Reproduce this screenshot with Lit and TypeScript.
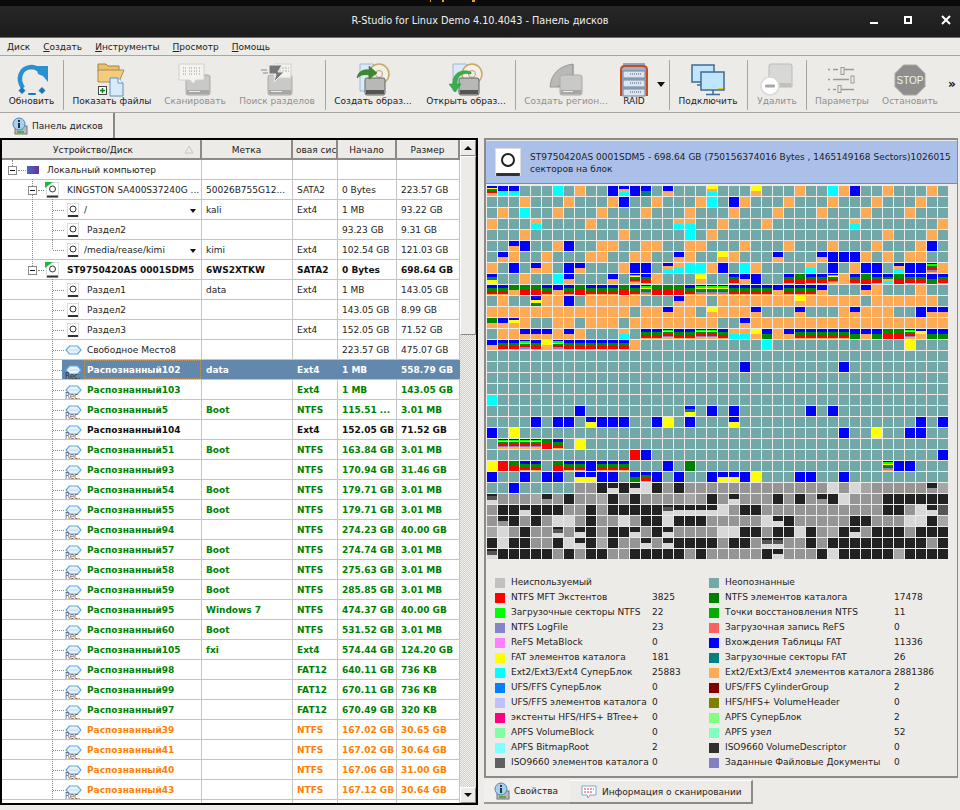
import { LitElement, html, css, svg } from "lit";
import { customElement } from "lit/decorators.js";

const MAP = [
"ebbTTTCTOT"+"TBsBhTaTTT"+"tTTTdTTTOT"+"TCOBTTOTTT"+"OT",
"TTTOTTTOTT"+"TOBTTOTTTO"+"CTBOTTTOTT"+"TOTTTOTTTO"+"TT",
"TOTCTTOTTT"+"OTTTOTTTOT"+"TTOTTTOTTT"+"OTTTOTTTOT"+"TT",
"OTTTcTTTTO"+"TTTTTTTccT"+"TOTTTOTTTT"+"TTTcTTTTTT"+"TO",
"TTTOTTTTTT"+"TTOTTTTTCT"+"OTTTTTTTTT"+"TTTTTTOTTT"+"OT",
"TTaBTTOBTT"+"OOTTOOTTOO"+"TTTOTTTOTT"+"TOTTTOTTTO"+"BT",
"TaOTTOTTTO"+"OTTOOTTaOT"+"TdOTTTaTTT"+"aBBBOTOTOO"+"TT",
"OTBTaOTBaT"+"TTOBBTucCC"+"OBTCOTTTTc"+"TBTOBBTvBB"+"mO",
"xTTOTTCaTT"+"TaTmfOTTTd"+"TTfaBTTfgf"+"fmOfgfwgff"+"jf",
"ffkggfafgf"+"ffgfmgggfm"+"mmffffafff"+"aTTTaOTTTO"+"TT",
"TOTTyOOBTO"+"OOOOTTTaOO"+"TOOOOOOOdO"+"OOOOTOOOOO"+"OT",
"OOOOOOOOOO"+"OOOTOOaOOT"+"dOOOaTTTaT"+"TTOaOOOTTB"+"aa",
"kazOTTOOTO"+"OOTOOOOOOO"+"OTTaOOOOOO"+"OOOOOOOOOO"+"OO",
"TOOaaaOaOT"+"TTcTffmffm"+"mfccdjOaff"+"fffjajggmz"+"jj",
"affmfdmfff"+"fffOTTTTTT"+"TTTTTCTTTT"+"TTTTTTTTYT"+"TT",
"TTTTTTTTTT"+"TTTTTTTTTT"+"TTTTTTTTTT"+"TTTTTTTTTT"+"TT",
"TTTTTTTTTT"+"TTTTTTTTTT"+"TTTBTTTTTT"+"TTBTTTTTTT"+"TT",
"TTTTTTTTTT"+"TTTTTTTTTT"+"TTTTTTTTTT"+"TTTTTTTTTT"+"TT",
"TTTTTTTTTT"+"TTTTTTTTTT"+"TTTTTTTTTT"+"TTTTTTTTTT"+"TT",
"CTTTTTTTTT"+"TTTTTTTTTT"+"TTTTTTTTTT"+"TTTTTTTTTT"+"TT",
"TTTTTTTTBT"+"TTTTTTTTxT"+"BTBTTTTTTB"+"TBTTTTTTTT"+"TT",
"TTTTBTBBTi"+"BBBTTBYTBT"+"TTiTTTTTTT"+"TTTTTTTTTB"+"TB",
"BTYTTTTTTT"+"TTTTTTTTTT"+"TTTTTTTTTT"+"TTBTTYTTBB"+"TT",
"TmmmmgfTYT"+"TTTTTTTTTT"+"TTTTTTTTTT"+"TTTTTTTTTT"+"TT",
"TTTTTTTTTT"+"TTTRBTTTTT"+"TTTTTTTTTT"+"TTTTTTTTTT"+"TB",
"YRgffTgffB"+"fffTTTBTGT"+"TTTTTTTTTT"+"TTTTTTmBBT"+"TT",
"BTTBTBBTii"+"BBTjfBTBTT"+"BiiBYTTTBB"+"TTBTTTTTTT"+"TT",
"TTBTTTTT11"+"DnDnLD1D11"+"1111111111"+"1L1L211111"+"p2",
"q1112p1D11"+"2D1D111121"+"D1n111D1D1"+"pDL111DDDD"+"DD",
"1DDnDDD11D"+"1DDDDDqnnn"+"nL1DD11111"+"111111DD1L"+"nX",
"1pD1D1LL1D"+"11L1DDLDDD"+"11111LnD11"+"111DD111LL"+"D2",
"2L1D11q1nD"+"1DDn1Dn111"+"1LLDD1DDLD"+"12Dn1DDD1D"+"DD",
"DLDD11DLnD"+"2D11n1nDDD"+"D1DD1qq11D"+"1DDDDDDDDD"+"1D",
"qDDDDD1D1D"+"D11DDDDD1D"+"11111Dn111"+"DLDDDDD2DD"+"DD",
];

interface Row {
  name: string; label?: string; fs?: string; start?: string; size?: string;
  tone?: string; icon: string; lvl: number; v?: string; drop?: boolean; narrow?: boolean;
}
const rec = (n: string, label: string, fs: string, start: string, size: string, tone: string): Row =>
  ({ name: "Распознанный" + n, label, fs, start, size, tone, icon: "rec", lvl: 2, v: "v52" });

const ROWS: Row[] = [
  { name: "Локальный компьютер", icon: "pc", lvl: 0, v: "v12t" },
  { name: "KINGSTON SA400S37240G ...", label: "50026B755G12...", fs: "SATA2", start: "0 Bytes", size: "223.57 GB", icon: "hd", lvl: 1, v: "v32" },
  { name: "/", label: "kali", fs: "Ext4", start: "1 MB", size: "93.22 GB", icon: "vol", lvl: 2, v: "v32 v52", drop: true, narrow: true },
  { name: "Раздел2", start: "93.23 GB", size: "9.31 GB", icon: "vol", lvl: 2, v: "v32 v52" },
  { name: "/media/rease/kimi", label: "kimi", fs: "Ext4", start: "102.54 GB", size: "121.03 GB", icon: "vol", lvl: 2, v: "v32 v52e", drop: true, narrow: true },
  { name: "ST9750420AS 0001SDM5", label: "6WS2XTKW", fs: "SATA2", start: "0 Bytes", size: "698.64 GB", tone: "k", icon: "hd", lvl: 1, v: "v32e" },
  { name: "Раздел1", label: "data", fs: "Ext4", start: "1 MB", size: "143.05 GB", icon: "vol", lvl: 2, v: "v52" },
  { name: "Раздел2", start: "143.05 GB", size: "8.99 GB", icon: "vol", lvl: 2, v: "v52" },
  { name: "Раздел3", fs: "Ext4", start: "152.05 GB", size: "71.52 GB", icon: "vol", lvl: 2, v: "v52" },
  { name: "Свободное Место8", start: "223.57 GB", size: "475.07 GB", icon: "free", lvl: 2, v: "v52" },
  rec("102", "data", "Ext4", "1 MB", "558.79 GB", "sel"),
  rec("103", "", "Ext4", "1 MB", "143.05 GB", "g"),
  rec("5", "Boot", "NTFS", "115.51 ...", "3.01 MB", "g"),
  rec("104", "", "Ext4", "152.05 GB", "71.52 GB", "k"),
  rec("51", "Boot", "NTFS", "163.84 GB", "3.01 MB", "g"),
  rec("93", "", "NTFS", "170.94 GB", "31.46 GB", "g"),
  rec("54", "Boot", "NTFS", "179.71 GB", "3.01 MB", "g"),
  rec("55", "Boot", "NTFS", "179.71 GB", "3.01 MB", "g"),
  rec("94", "", "NTFS", "274.23 GB", "40.00 GB", "g"),
  rec("57", "Boot", "NTFS", "274.74 GB", "3.01 MB", "g"),
  rec("58", "Boot", "NTFS", "275.63 GB", "3.01 MB", "g"),
  rec("59", "Boot", "NTFS", "285.85 GB", "3.01 MB", "g"),
  rec("95", "Windows 7", "NTFS", "474.37 GB", "40.00 GB", "g"),
  rec("60", "Boot", "NTFS", "531.52 GB", "3.01 MB", "g"),
  rec("105", "fxi", "Ext4", "574.44 GB", "124.20 GB", "g"),
  rec("98", "", "FAT12", "640.11 GB", "736 KB", "g"),
  rec("99", "", "FAT12", "670.11 GB", "736 KB", "g"),
  rec("97", "", "FAT12", "670.49 GB", "320 KB", "g"),
  rec("39", "", "NTFS", "167.02 GB", "30.65 GB", "o"),
  rec("41", "", "NTFS", "167.02 GB", "30.64 GB", "o"),
  rec("40", "", "NTFS", "167.06 GB", "31.00 GB", "o"),
  rec("43", "", "NTFS", "167.12 GB", "30.64 GB", "o"),
];

const LEGEND: [string, string, string, string, string, string][] = [
  ["#c0c0c0", "Неиспользуемый", "", "#73a8a8", "Неопознанные", ""],
  ["#ff0000", "NTFS MFT Экстентов", "3825", "#008000", "NTFS элементов каталога", "17478"],
  ["#00ff00", "Загрузочные секторы NTFS", "22", "#00b000", "Точки восстановления NTFS", "11"],
  ["#8484c8", "NTFS LogFile", "23", "#ff6060", "Загрузочная запись ReFS", "0"],
  ["#ff80ff", "ReFS MetaBlock", "0", "#0000ff", "Вхождения Таблицы FAT", "11336"],
  ["#ffff00", "FAT элементов каталога", "181", "#008080", "Загрузочные секторы FAT", "26"],
  ["#00ffff", "Ext2/Ext3/Ext4 СуперБлок", "25883", "#ffaa55", "Ext2/Ext3/Ext4 элементов каталога", "2881386"],
  ["#0080ff", "UFS/FFS СуперБлок", "0", "#800000", "UFS/FFS CylinderGroup", "2"],
  ["#c0c0ff", "UFS/FFS элементов каталога", "0", "#808000", "HFS/HFS+ VolumeHeader", "0"],
  ["#ff0080", "экстенты HFS/HFS+ BTree+", "0", "#80ff80", "APFS СуперБлок", "2"],
  ["#80ffa0", "APFS VolumeBlock", "0", "#80ffc0", "APFS узел", "52"],
  ["#80ffff", "APFS BitmapRoot", "2", "#303030", "ISO9660 VolumeDescriptor", "0"],
  ["#606060", "ISO9660 элементов каталога", "0", "#8080c0", "Заданные Файловые Документы", "0"],
];

const disk = (x: number, y: number, w: number, h: number) => svg`
  <rect x=${x} y=${y} width=${w} height=${h} rx="2" fill="#c9c9c7" stroke="#a9a9a7"/>
  <rect x=${x + 1} y=${y + h - 5} width=${w - 2} height="4" fill="#a6a6a4"/>
  <rect x=${x + 3} y=${y + h - 4} width=${w * 0.45} height="1" fill="#eee"/>`;

const ICONS: Record<string, unknown> = {
  refresh: svg`<svg width="34" height="32" viewBox="0 0 34 32">
    <path d="M8 24C2 15 5 4 16 3c3 0 6 1 8 3" fill="none" stroke="#2a90d0" stroke-width="4.500"/>
    <path d="M21 2h12v16L28 12l-5-2z" fill="#2a90d0"/>
    <path d="M7 23l3.500 3.500L7 30l-3.500-3.500zM27 23l3.500 3.500L27 30l-3.500-3.500z" fill="#1878b8"/>
    <rect x="13" y="29" width="8" height="2" rx="1" fill="#1878b8"/></svg>`,
  files: svg`<svg width="30" height="34" viewBox="0 0 30 34">
    <path d="M1 1h8l2 2h11v5H1z" fill="#e8c070" stroke="#a88040"/>
    <path d="M1 19V7h26l-5 12z" fill="#f2cd80" stroke="#b08a45"/>
    <path d="M13 15h8l5 5v13H13z" fill="#d8ecf8" stroke="#5a92c0"/>
    <path d="M21 15v5h5" fill="#fff" stroke="#5a92c0"/>
    <rect x="1.500" y="23.500" width="8" height="8" fill="#fff" stroke="#444"/>
    <path d="M5.500 25v5M3 27.500h5" stroke="#0a7a20" stroke-width="1.500"/></svg>`,
  scan: svg`<svg width="34" height="34" viewBox="0 0 34 34">
    ${disk(8, 12, 24, 20)}
    <path d="M1 1h25v16H18l-3 4-3-4H1z" fill="#f4f3ef" stroke="#d0d0cc"/>
    <path d="M5 5h4M11 5h3M16 5h3M21 5h2M5 8h4M11 8h3M16 8h3M21 8h2M5 11h4M11 11h3M16 11h3M21 11h2" stroke="#9a9a9a" stroke-dasharray="1 1"/></svg>`,
  search: svg`<svg width="34" height="34" viewBox="0 0 34 34">
    ${disk(8, 12, 24, 20)}
    <path d="M14 1h17v14H14z" fill="#f4f3ef" stroke="#d0d0cc"/>
    <path d="M19 5h10M19 8h10" stroke="#a8a8a8" stroke-dasharray="2 1"/>
    <path d="M9 2h13l-4 7h6L14 19l2-8H9z" fill="#777" stroke="#eee"/>
    <path d="M1 7h6M3 10h5" stroke="#888"/></svg>`,
  mkimg: svg`<svg width="34" height="34" viewBox="0 0 34 34">
    <path d="M4 1h13l5 5v22H4z" fill="#dce9f6" stroke="#9ab8d8"/>
    <circle cx="23" cy="11" r="10" fill="#f3efe4" stroke="#c8a868" stroke-width="1.500"/><circle cx="23" cy="11" r="3.500" fill="#eee" stroke="#b8a070"/>
    <rect x="9" y="15" width="20" height="17" rx="2" fill="#b8b8b6" stroke="#666"/><rect x="10" y="27" width="18" height="4" fill="#555"/>
    <path d="M1 15c1-7 7-9 12-8V3l8 7-8 6v-4c-5-1-9 0-12 3z" fill="#3c8a30" stroke="#2a6a20" stroke-width=".5"/></svg>`,
  opimg: svg`<svg width="34" height="34" viewBox="0 0 34 34">
    <path d="M4 1h13l5 5v22H4z" fill="#dce9f6" stroke="#9ab8d8"/>
    <circle cx="23" cy="11" r="10" fill="#f3efe4" stroke="#c8a868" stroke-width="1.500"/><circle cx="23" cy="11" r="3.500" fill="#eee" stroke="#b8a070"/>
    <rect x="10" y="15" width="20" height="17" rx="2" fill="#b8b8b6" stroke="#666"/><rect x="11" y="27" width="18" height="4" fill="#555"/>
    <path d="M22 11C14 9 8 12 8 21h4l-6 8-6-8h4C3 11 12 5 22 9z" fill="#38b048" stroke="#2a8a30" stroke-width=".5"/></svg>`,
  region: svg`<svg width="34" height="34" viewBox="0 0 34 34">
    <path d="M1 24C2 11 10 3 24 1v11c-7 1-11 6-12 12z" fill="#b9b9b7" stroke="#9a9a98"/>
    <path d="M24 1v22H8" fill="none" stroke="#8a8a8a" stroke-width=".7"/>
    ${disk(11, 12, 22, 20)}</svg>`,
  raid: svg`<svg width="28" height="34" viewBox="0 0 28 34">
    <rect x="3" y="0" width="22" height="4" fill="#8ea4bc"/>
    <rect x="1" y="3" width="26" height="30" fill="#9db0c6"/>
    <path d="M1 33V7q0-4 4-4h18q4 0 4 4v26" fill="none" stroke="#cc4a1c" stroke-width="2"/>
    <g fill="#dbe6f0" stroke="#6f85a0"><rect x="3" y="8" width="22" height="7"/><rect x="3" y="17" width="22" height="7"/><rect x="3" y="26" width="22" height="7"/></g>
    <path d="M10 11h11M10 20h11M10 29h11" stroke="#556" stroke-dasharray="1 1"/></svg>`,
  connect: svg`<svg width="34" height="32" viewBox="0 0 34 32">
    <rect x="1" y="1" width="22" height="17" fill="#bfe6fa" stroke="#3f6a98" stroke-width="1.500"/>
    <path d="M9 18h6v3H6" stroke="#3f6a98" fill="none" stroke-width="1.500"/>
    <rect x="10" y="8" width="23" height="18" fill="#bfe6fa" stroke="#3f6a98" stroke-width="1.500"/>
    <rect x="27" y="24" width="5" height="1" fill="#e8c020"/>
    <path d="M22 26v4M15 30.500h14" stroke="#3f6a98" stroke-width="1.500"/></svg>`,
  del: svg`<svg width="34" height="34" viewBox="0 0 34 34">
    <path d="M9 3q0-2 2-2h19q2 0 2 2v21H9z" fill="#d8d8d6" stroke="#bbb"/>
    <rect x="10" y="20" width="21" height="4" fill="#c0c0be"/>
    <circle cx="10" cy="23" r="9" fill="#fff" stroke="#d8d8d6" stroke-width="1.500"/>
    <rect x="5" y="21.500" width="10" height="3" rx="1" fill="#a8a8a8"/></svg>`,
  params: svg`<svg width="30" height="26" viewBox="0 0 30 26">
    <g stroke="#9a9a9a" stroke-width="1.500" fill="none">
    <path d="M1 2.500h2M6 2.500h5M17 2.500h10M1 12.500h2M6 12.500h16M1 22.500h2M6 22.500h3M14 22.500h13"/></g>
    <g fill="#eee" stroke="#9a9a9a"><rect x="14" y=".5" width="3" height="7"/><rect x="24" y="9" width="3" height="7"/><rect x="11" y="18.500" width="3" height="7"/></g></svg>`,
  stop: svg`<svg width="32" height="32" viewBox="0 0 32 32">
    <path d="M9.500 1h13L31 9.500v13L22.500 31h-13L1 22.500v-13z" fill="#8e8e8c" stroke="#a8a8a6"/>
    <text x="16" y="20" text-anchor="middle" font-family="Liberation Sans, sans-serif" font-size="10" fill="#f2f2f0">STOP</text></svg>`,
};

const TOOLS: any[] = [
  { i: "refresh", t: "Обновить", w: 63 }, { sep: 1 },
  { i: "files", t: "Показать файлы", w: 96 },
  { i: "scan", t: "Сканировать", w: 70, off: 1 },
  { i: "search", t: "Поиск разделов", w: 94, off: 1 }, { gap: 1 }, { sep: 1 },
  { i: "mkimg", t: "Создать образ...", w: 94 },
  { i: "opimg", t: "Открыть образ...", w: 92 }, { gap: 3 }, { sep: 1 },
  { i: "region", t: "Создать регион...", w: 100, off: 1 },
  { i: "raid", t: "RAID", w: 36 }, { arrow: 1 }, { sep: 1 },
  { i: "connect", t: "Подключить", w: 76 }, { gap: 1 }, { sep: 1 },
  { i: "del", t: "Удалить", w: 58, off: 1 }, { sep: 1 },
  { i: "params", t: "Параметры", w: 70, off: 1 },
  { i: "stop", t: "Остановить", w: 66, off: 1 },
];

const hex = svg`<svg class="hex" width="17" height="10" viewBox="0 0 17 10"><path d="M1 5l3.500-4h8L16 5l-3.500 4h-8z" fill="#e8f2fb" stroke="#62a8e0" stroke-width="1.200"/><path d="M4 5h9" stroke="#b8d8f2"/></svg>`;

const rowIcon = (k: string) => {
  if (k === "pc") return html`<span class="ipc"></span>`;
  if (k === "hd") return html`<svg class="ihd" width="15" height="17" viewBox="0 0 15 17"><rect x="1.500" y=".5" width="12" height="15" fill="#fff" stroke="#ddd"/><path d="M0 0h8L0 6z" fill="#10c040"/><circle cx="7.500" cy="7" r="3" fill="none" stroke="#333"/><rect x="2" y="13.500" width="11" height="2" fill="#333"/></svg>`;
  if (k === "vol") return html`<svg class="ivol" width="12" height="15" viewBox="0 0 12 15"><rect x=".5" y=".5" width="11" height="13" fill="#fff" stroke="#ddd"/><circle cx="6" cy="6" r="3" fill="none" stroke="#333"/><rect x="1" y="12" width="10" height="2" fill="#333"/></svg>`;
  if (k === "free") return html`<span class="ifree">${hex}</span>`;
  return html`<span class="ifree">${hex}<span class="rectext">Rec.</span></span>`;
};

@customElement("app-root")
export class AppRoot extends LitElement {
  static styles = css`
    :host { display: block; width: 960px; height: 810px; overflow: hidden; background: #edebe7; color: #222;
      font: 9px/12px "DejaVu Sans", sans-serif; }
    .win { display: flex; flex-direction: column; height: 810px; }
    .strip { height: 6px; flex: none; background:
      linear-gradient(#e8a020 0 2px, transparent 0) 430px 0/1px 6px no-repeat,
      linear-gradient(#e8a020 0 2px, transparent 0) 442px 0/2px 6px no-repeat,
      linear-gradient(#e8a020 0 2px, transparent 0) 472px 0/3px 6px no-repeat,
      #0a0a0a; }
    .title { height: 32px; flex: none; background: linear-gradient(#272727, #1c1c1c); border-bottom: 1px solid #6e6e6c; box-sizing: border-box;
      display: flex; align-items: center; justify-content: center; position: relative; color: #f0f0f0;
      font: 10.800px "DejaVu Sans Condensed", "DejaVu Sans", sans-serif; font-stretch: condensed; padding-bottom: 2px; }
    .wctl { position: absolute; right: 8px; top: 8px; display: flex; align-items: center; }
    .wctl svg + svg { margin-left: 26px; }
    .wctl svg:first-child + svg { margin-left: 22px; }
    .menu { height: 17px; flex: none; display: flex; align-items: center; padding-left: 7px; gap: 13px; border-bottom: 1px solid #a8a6a2; color: #222; }
    .toolbar { height: 56px; flex: none; display: flex; align-items: stretch; border-bottom: 1px solid #a8a6a2; }
    .tb { display: flex; flex-direction: column; align-items: center; flex: none; white-space: nowrap; color: #222; }
    .tb.off { color: #8f8f8d; }
    .tb .ic { height: 39px; padding-top: 8px; box-sizing: border-box; display: flex; align-items: center; justify-content: center; }
    .tb .lb { height: 12px; line-height: 13px; }
    .sep { width: 1px; flex: none; background: #a6a4a0; margin: 4px 0 2px; }
    .arrow { width: 17px; flex: none; display: flex; justify-content: center; padding-top: 26px; box-sizing: border-box; }
    .arrow i { display: block; width: 0; height: 0; border: 4px solid transparent; border-top: 5px solid #111; border-bottom: 0; }
    .more { flex: none; padding: 21px 0 0 5px; font: bold 12px "DejaVu Sans", sans-serif; color: #111; }
    .tabs { height: 25px; flex: none; display: flex; }
    .tab1 { width: 115px; height: 25px; box-sizing: border-box; border-right: 2px solid #8a8886; display: flex; align-items: center; gap: 4px; padding-left: 12px; background: #f1efeb; }
    .main { flex: 1; display: flex; min-height: 0; align-items: flex-start; }
    .tree { width: 478px; height: 667px; flex: none; box-sizing: border-box; border: 2px solid #000; display: flex; background: #fff; overflow: hidden; }
    .tbl { width: 458px; flex: none; display: flex; flex-direction: column; overflow: hidden; }
    .hdr, .row { display: grid; grid-template-columns: 200px 91px 45px 59px 63px; flex: none; }
    .hdr { height: 20px; background: #edebe7; }
    .hdr > div { position: relative; display: flex; align-items: center; justify-content: center; overflow: hidden; white-space: nowrap; padding-top: 1px;
      border-right: 2px solid #8c8a88; border-bottom: 2px solid #8c8a88; box-sizing: border-box; color: #222; }
    .hdr .first { padding-right: 16px; }
    .hdr .clip { justify-content: flex-start; padding-left: 3px; }
    .sort { position: absolute; right: 6px; top: 5px; }
    .row { height: 20px; box-sizing: border-box; border-bottom: 1px solid #c4c4c4; background: #fff; line-height: 21px; color: #222; }
    .row > div { border-right: 1px solid #c4c4c4; padding-left: 4px; white-space: nowrap; overflow: hidden; box-sizing: border-box; }
    .row > .nm { position: relative; padding: 0; overflow: visible; z-index: 1; }
    .nm .tx { position: absolute; top: 0; z-index: 2; }
    .row.k { font-weight: bold; color: #111; }
    .row.g { font-weight: bold; color: #008000; }
    .row.o { font-weight: bold; color: #ff8000; }
    .row.sel { font-weight: bold; color: #fff; }
    .row.sel > div:not(.nm) { background: #6388ad; border-right-color: #6388ad; }
    .selbg { position: absolute; left: 60px; right: -1px; top: 0; bottom: 0; background: #6388ad; }
    .focus { position: absolute; left: 82px; right: 0; top: 0; bottom: 0; border: 1px dotted #b89868; }
    .v12t, .v32, .v32e, .v52, .v52e, .hl { position: absolute; border-left: 1px dotted #888; width: 0; }
    .v12t { left: 10px; top: 0; height: 6px; }
    .v32 { left: 30px; top: -1px; bottom: -1px; }
    .v32e { left: 30px; top: -1px; height: 7px; }
    .v52 { left: 50px; top: -1px; bottom: -1px; }
    .v52e { left: 50px; top: -1px; height: 10px; }
    .hl { border-left: 0; border-top: 1px dotted #888; height: 0; top: 10px; }
    .hl0 { left: 16px; width: 8px; }
    .hl1 { left: 36px; width: 6px; }
    .hl2 { left: 51px; width: 11px; }
    .box { position: absolute; top: 6px; width: 9px; height: 9px; box-sizing: border-box; border: 1px solid #8a8a8a; background: #fff; }
    .box::after { content: ""; position: absolute; left: 1px; right: 1px; top: 3px; height: 1px; background: #111; }
    .box0 { left: 6px; } .box1 { left: 26px; }
    .icw { position: absolute; display: block; line-height: 0; }
    .icw0 { left: 25px; top: 6px; } .icw1 { left: 43px; top: 2px; } .icw2 { left: 65px; top: 3px; }
    .icwf { left: 63px; top: 5px; }
    .ipc { display: block; width: 12px; height: 8px; background: linear-gradient(90deg, #4466cc, #663399); }
    .ifree { display: block; position: relative; line-height: 0; }
    .rectext { position: absolute; left: 0; top: 7px; font: 8px/10px "DejaVu Sans Condensed", "DejaVu Sans", sans-serif; color: #555; }
    .row.sel .rectext { color: #333; }
    .drop { position: absolute; left: 188px; top: 9px; width: 0; height: 0; border: 3px solid transparent; border-top: 4px solid #111; border-bottom: 0; }
    .sb { width: 16px; flex: none; display: flex; flex-direction: column; background-color: #edebe7;
      background-image: repeating-conic-gradient(#cfcdc9 0 25%, #f4f2ee 0 50%); background-size: 2px 2px; }
    .sbb { height: 16px; flex: none; box-sizing: border-box; background: #edebe7; border: 1px solid; border-color: #fff #8c8a88 #8c8a88 #fff; display: flex; align-items: center; justify-content: center; }
    .up { width: 0; height: 0; border: 4px solid transparent; border-bottom: 4px solid #111; border-top: 0; }
    .dn { width: 0; height: 0; border: 4px solid transparent; border-top: 4px solid #111; border-bottom: 0; }
    .thumb { height: 179px; flex: none; background: #edebe7; box-sizing: border-box; border: 1px solid; border-color: #fff #8c8a88 #8c8a88 #fff; }
    .sp { flex: 1; }
    .right { width: 476px; flex: none; margin-left: 6px; display: flex; flex-direction: column; height: 667px; }
    .panel { width: 474px; height: 640px; flex: none; box-sizing: border-box; border: 2px solid #8c8a88; border-right-width: 1px; background: #edebe7; }
    .phead { height: 43px; margin-top: 1px; background: #aac0e8; border-bottom: 1px solid #8c8a88; box-sizing: border-box; display: flex; align-items: flex-start; }
    .phead svg { margin: 7px 9px 0 9px; flex: none; }
    .phead .t { padding-top: 10px; line-height: 12px; width: 428px; color: #222; }
    .map { display: grid; grid-template-columns: repeat(42, 10px); grid-auto-rows: 10px; gap: 1px; padding: 2px 0 0 1px; }
    .c { width: 10px; height: 10px; }
    .cT { background: #73a8a8; } .cO { background: #ffaa55; } .cB { background: #0000ff; } .cC { background: #00ffff; }
    .cY { background: #ffff00; } .cR { background: #ff0000; } .cG { background: #008000; }
    .cD { background: #222; } .c1 { background: #959595; } .c2 { background: #a6a6a6; } .cL { background: #d8d8d8; } .cX { background: #555; }
    .ca { background: linear-gradient(#00f 0 50%, #fa5 0); } .cb { background: linear-gradient(#00f 0 50%, #0ff 0); }
    .cc { background: linear-gradient(#fa5 0 50%, #0ff 0); } .cd { background: linear-gradient(#ff0 0 50%, #fa5 0); }
    .ce { background: linear-gradient(#00f 0 15%, #ff0 0 30%, #080 0 50%, #f00 0 65%, #fa5 0 85%, #0ff 0); }
    .cf { background: linear-gradient(#00f 0 30%, #080 0 60%, #f00 0 90%, #fa5 0); }
    .cg { background: linear-gradient(#080 0 50%, #f00 0); } .ch { background: linear-gradient(#00f 0 50%, #008080 0); }
    .ci { background: linear-gradient(#00f 0 50%, #ff0 0); } .cj { background: linear-gradient(#00f 0 50%, #080 0); }
    .ck { background: linear-gradient(#080 0 50%, #fa5 0); }
    .cm { background: linear-gradient(#00f 0 10%, #0f0 0 25%, #ff0 0 35%, #080 0 55%, #f00 0 70%, #8484c8 0 85%, #fa5 0); }
    .cs { background: linear-gradient(#00f 0 30%, #fa5 0 60%, #0ff 0); } .ct { background: linear-gradient(#ff0 0 30%, #fa5 0 60%, #0ff 0); }
    .cu { background: linear-gradient(#00f 0 30%, #fa5 0 60%, #0ff 0); } .cv { background: linear-gradient(#00f 0 25%, #fa5 0 65%, #0ff 0); }
    .cw { background: linear-gradient(#00f 0 30%, #080 0 50%, #fa5 0 70%, #0ff 0); } .cx { background: linear-gradient(#00f 0 30%, #008080 0 60%, #ff0 0); }
    .cy { background: linear-gradient(#00f 0 35%, #ff0 0 65%, #080 0); } .cz { background: linear-gradient(#00f 0 20%, #ff0 0 50%, #fa5 0); }
    .cq { background: linear-gradient(#222 0 25%, #555 0 60%, #d8d8d8 0); } .cn { background: linear-gradient(#222 0 50%, #d8d8d8 0); }
    .cp { background: linear-gradient(#222 0 50%, #959595 0); }
    .legend { display: grid; grid-template-columns: 157px 57px 185px 60px; grid-auto-rows: 15px; padding: 16px 0 0 9px; line-height: 15px; color: #222; }
    .lg { display: flex; align-items: center; gap: 6px; white-space: nowrap; }
    .sw { width: 10px; height: 10px; flex: none; }
    .btabs { display: flex; height: 25px; flex: none; margin-top: 2px; }
    .bt { display: flex; align-items: center; box-sizing: border-box; height: 24px; white-space: nowrap; }
    .bt1 { width: 86px; padding-left: 10px; gap: 4px; background: #f1efeb; border-bottom: 2px solid #9a9894; }
    .bt2 { width: 183px; padding-left: 11px; gap: 5px; border-right: 2px solid #8c8a88; border-bottom: 2px solid #8c8a88; border-top: 1px solid #fff; }
  `;

  private tbIcon(k: string) { return ICONS[k]; }

  private infoIcon() {
    return svg`<svg width="16" height="18" viewBox="0 0 16 18"><rect x="3" y="9" width="12" height="8" fill="#b8b8b6" stroke="#777"/><rect x="5" y="14" width="7" height="2" fill="#50b040"/><circle cx="7" cy="7" r="6" fill="#a8d0ec" stroke="#4a88b8"/><rect x="6" y="6" width="2" height="5" fill="#234"/><rect x="6" y="3" width="2" height="2" fill="#234"/></svg>`;
  }

  private renderRow(r: Row) {
    const tone = r.tone ?? "";
    const textLeft = r.lvl === 0 ? 45 : r.lvl === 1 ? 65 : r.narrow ? 82 : 85;
    return html`<div class="row ${tone}">
      <div class="nm">
        ${tone === "sel" ? html`<span class="selbg"></span><span class="focus"></span>` : ""}
        ${(r.v ?? "").split(" ").filter(Boolean).map((v) => html`<span class=${v}></span>`)}
        <span class="hl hl${r.lvl}"></span>
        ${r.lvl < 2 ? html`<span class="box box${r.lvl}"></span>` : ""}
        <span class="icw ${r.icon === "free" || r.icon === "rec" ? "icwf" : "icw" + r.lvl}">${rowIcon(r.icon)}</span>
        <span class="tx" style="left:${textLeft}px">${r.name}</span>
        ${r.drop ? html`<span class="drop"></span>` : ""}
      </div>
      <div>${r.label ?? ""}</div><div>${r.fs ?? ""}</div><div>${r.start ?? ""}</div><div>${r.size ?? ""}</div>
    </div>`;
  }

  render() {
    return html`<div class="win">
      <div class="strip"></div>
      <div class="title">R-Studio for Linux Demo 4.10.4043 - Панель дисков
        <div class="wctl">
          <svg width="12" height="12" viewBox="0 0 12 12"><rect x="2" y="8" width="8" height="2" fill="#fff"/></svg>
          <svg width="12" height="12" viewBox="0 0 12 12"><rect x="3" y="3" width="6" height="6" fill="none" stroke="#fff" stroke-width="2"/></svg>
          <svg width="12" height="12" viewBox="0 0 12 12"><path d="M2 2l8 8M10 2l-8 8" stroke="#fff" stroke-width="2"/></svg>
        </div>
      </div>
      <div class="menu">
        <span><u>Д</u>иск</span><span><u>С</u>оздать</span><span><u>И</u>нструменты</span><span><u>П</u>росмотр</span><span><u>П</u>омощь</span>
      </div>
      <div class="toolbar">
        ${TOOLS.map((t) => t.sep ? html`<div class="sep"></div>`
          : t.gap ? html`<div style="width:${t.gap}px;flex:none"></div>`
          : t.arrow ? html`<div class="arrow"><i></i></div>`
          : html`<div class="tb ${t.off ? "off" : ""}" style="width:${t.w}px"><div class="ic">${this.tbIcon(t.i)}</div><div class="lb">${t.t}</div></div>`)}
        <div class="more">»</div>
      </div>
      <div class="tabs"><div class="tab1">${this.infoIcon()}Панель дисков</div></div>
      <div class="main">
        <div class="tree">
          <div class="tbl">
            <div class="hdr">
              <div class="first">Устройство/Диск<svg class="sort" width="10" height="9" viewBox="0 0 10 9"><path d="M5 1l4 7H1z" fill="none" stroke="#c8c6c2"/></svg></div>
              <div>Метка</div><div class="clip">овая сис</div><div>Начало</div><div>Размер</div>
            </div>
            ${ROWS.map((r) => this.renderRow(r))}
            <div class="row"><div></div><div></div><div></div><div></div><div></div></div>
          </div>
          <div class="sb">
            <div class="sbb"><i class="up"></i></div>
            <div class="thumb"></div>
            <div class="sp"></div>
            <div class="sbb"><i class="dn"></i></div>
          </div>
        </div>
        <div class="right">
          <div class="panel">
            <div class="phead">
              <svg width="26" height="29" viewBox="0 0 26 29"><rect x=".5" y=".5" width="25" height="27" fill="#fff" stroke="#ddd"/><circle cx="13" cy="12" r="6" fill="none" stroke="#222" stroke-width="2"/><rect x="1" y="25" width="24" height="3" rx="1" fill="#333"/></svg>
              <div class="t">ST9750420AS 0001SDM5 - 698.64 GB (750156374016 Bytes , 1465149168 Sectors)1026015 секторов на блок</div>
            </div>
            <div class="map">${MAP.flatMap((row) => row.padEnd(42, "T").slice(0, 42).split("").map((ch) => html`<div class="c c${ch}"></div>`))}</div>
            <div class="legend">
              ${LEGEND.map((l) => html`
                <div class="lg"><span class="sw" style="background:${l[0]}"></span>${l[1]}</div><div>${l[2]}</div>
                <div class="lg"><span class="sw" style="background:${l[3]}"></span>${l[4]}</div><div>${l[5]}</div>`)}
            </div>
          </div>
          <div class="btabs">
            <div class="bt bt1">${this.infoIcon()}Свойства</div>
            <div class="bt bt2">
              <svg width="16" height="14" viewBox="0 0 16 14"><path d="M1 1h14v9H9l-2 3-1-3H1z" fill="#fff" stroke="#7aa8d0"/><path d="M3 4h2M6 4h2M9 4h2M12 4h1M3 7h2M6 7h2M9 7h2" stroke="#d04040"/></svg>
              Информация о сканировании
            </div>
          </div>
        </div>
      </div>
    </div>`;
  }
}
